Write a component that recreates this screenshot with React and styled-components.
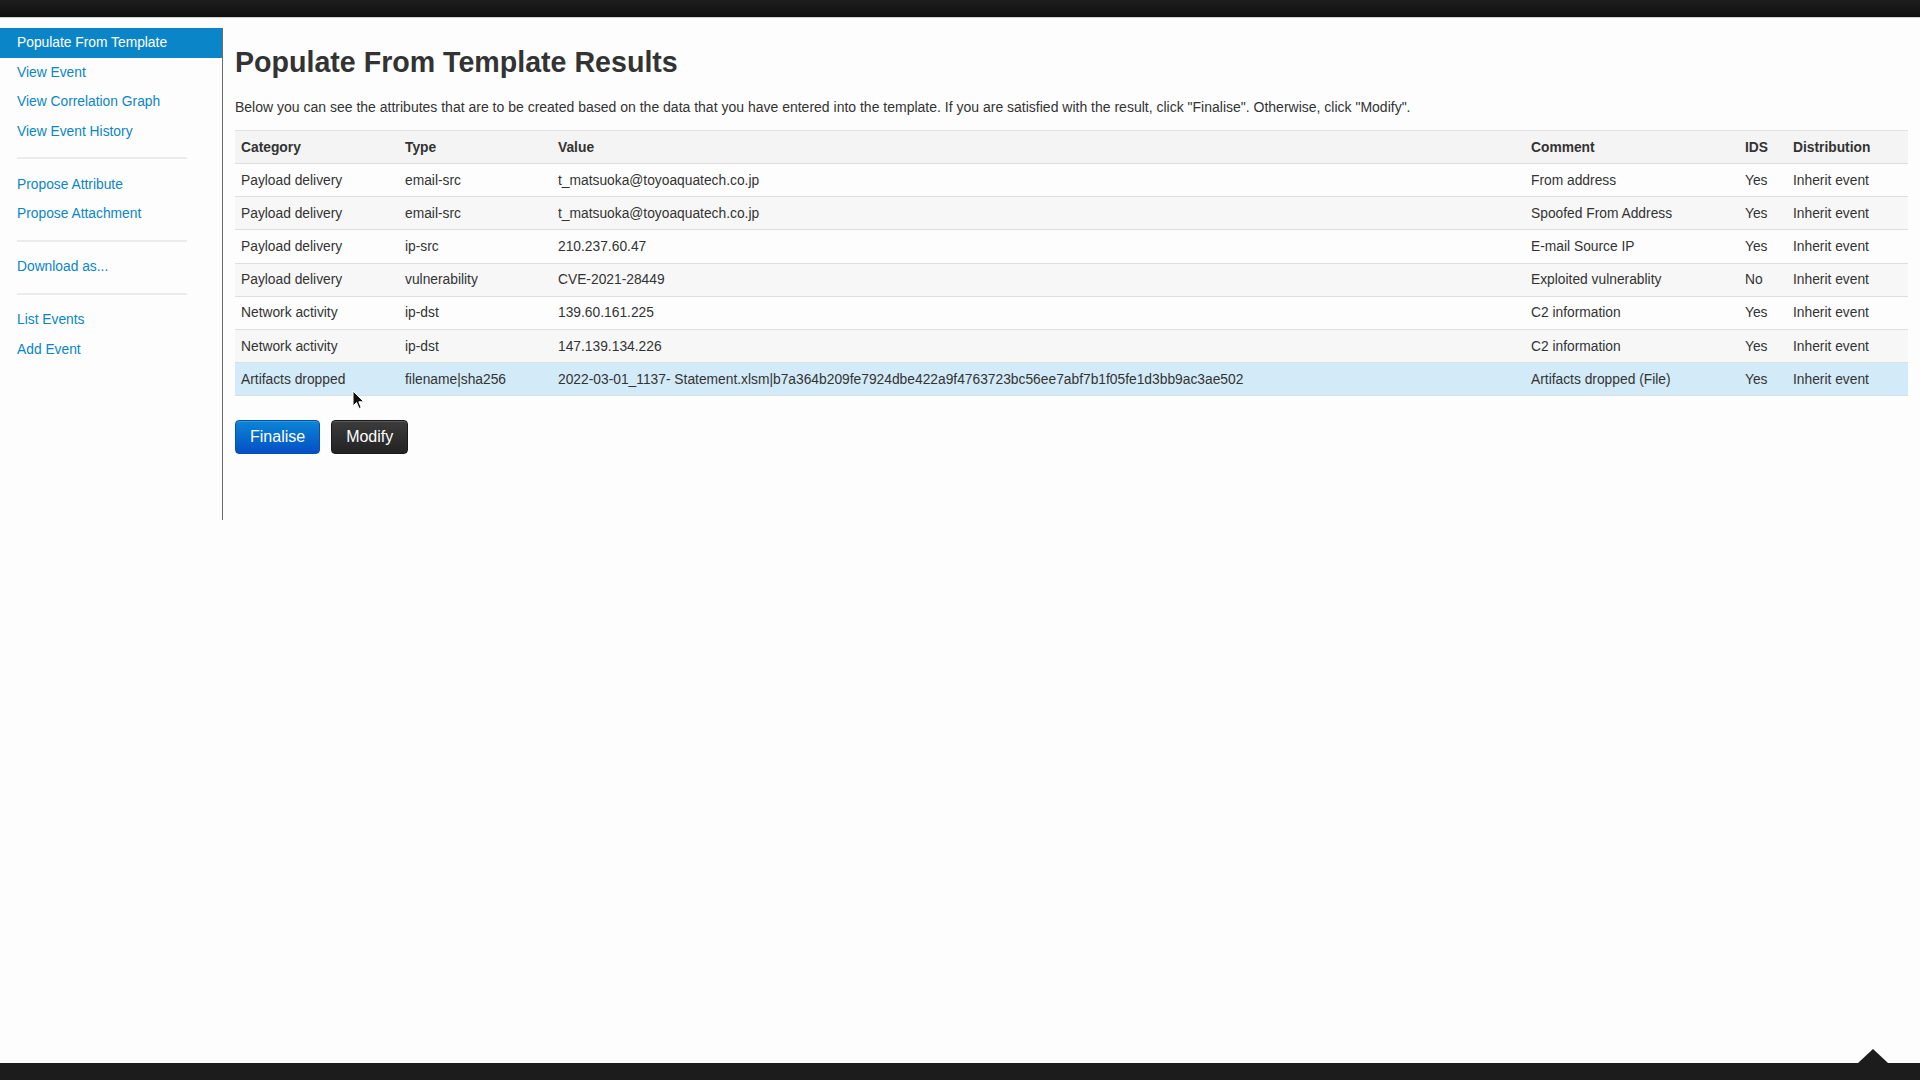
import React from 'react';
import styled, { createGlobalStyle } from 'styled-components';

const GlobalStyle = createGlobalStyle`
  html, body {
    margin: 0;
    padding: 0;
    background: #fdfdfd;
  }
  body {
    font-family: 'Liberation Sans', Arial, Helvetica, sans-serif;
    font-size: 13.8px;
    color: #333;
  }
`;

const Page = styled.div`
  min-height: 100vh;
  display: flex;
  flex-direction: column;
  position: relative;
`;

const TopBar = styled.div`
  height: 17px;
  background: linear-gradient(#1d1d1d, #0f0f0f);
  border-bottom: 1px solid #cfcfcf;
`;

const Body = styled.div`
  flex: 1;
  display: flex;
  align-items: flex-start;
`;

const Sidebar = styled.nav`
  width: 222px;
  height: 492px;
  margin-top: 10px;
  border-right: 1px solid #6a6a6a;
  display: flex;
  flex-direction: column;
  flex-shrink: 0;
`;

const NavLink = styled.a`
  display: block;
  padding: 6px 17px;
  line-height: 17.5px;
  font-size: 13.8px;
  text-decoration: none;
  color: ${p => (p.$active ? '#fff' : '#0a86c6')};
  background: ${p => (p.$active ? '#0a86c8' : 'transparent')};
`;

const Divider = styled.div`
  height: 2px;
  width: 170px;
  margin: 11px 0 10.5px 17px;
  background: #ececec;
`;

const Main = styled.main`
  flex: 1;
  min-width: 0;
  padding: 29px 12px 0 12px;
`;

const Title = styled.h2`
  margin: 0;
  font-size: 28.6px;
  line-height: 30px;
  font-weight: bold;
  color: #333;
`;

const Intro = styled.p`
  margin: 21px 0 14px;
  line-height: 18px;
  font-size: 14px;
`;

const Table = styled.table`
  width: 100%;
  border-collapse: collapse;
  table-layout: fixed;
  border-top: 1px solid #e2e2e2;
`;

const Th = styled.th`
  text-align: left;
  font-weight: bold;
  height: 32px;
  padding: 0 6px;
  background: #f4f4f4;
  border-bottom: 1px solid #dedede;
  width: ${p => p.$w - 12}px;
`;

const Row = styled.tr`
  background: ${p => (p.$selected ? '#d3eaf8' : p.$odd ? '#f7f7f7' : '#fdfdfd')};
`;

const Td = styled.td`
  height: 32.2px;
  padding: 0 6px;
  border-bottom: 1px solid #dedede;
  white-space: nowrap;
`;

const Actions = styled.div`
  display: flex;
  gap: 11px;
  margin-top: 24px;
`;

const Button = styled.button`
  height: 34px;
  padding: 0 14px;
  border-radius: 4px;
  font-family: 'Liberation Sans', Arial, sans-serif;
  font-size: 16px;
  color: #fff;
  cursor: pointer;
  border: 1px solid ${p => (p.$variant === 'primary' ? '#0a4db5' : '#1a1a1a')};
  background: ${p =>
    p.$variant === 'primary'
      ? 'linear-gradient(#0a86d6, #0450c4)'
      : 'linear-gradient(#3c3c3c, #222)'};
  box-shadow: inset 0 1px 0 rgba(255, 255, 255, 0.15);
`;

const Footer = styled.footer`
  height: 17px;
  background: #1c1c1c;
  position: relative;
`;

const UpArrow = styled.div`
  position: absolute;
  right: 32px;
  top: -14px;
  width: 0;
  height: 0;
  border-left: 15px solid transparent;
  border-right: 15px solid transparent;
  border-bottom: 14px solid #1c1c1c;
`;

const Cursor = styled.svg`
  position: absolute;
  left: 352px;
  top: 390px;
`;

const columns = [
  ['Category', 164],
  ['Type', 153],
  ['Value', 973],
  ['Comment', 214],
  ['IDS', 48],
  ['Distribution', 121],
];

const rows = [
  ['Payload delivery', 'email-src', 't_matsuoka@toyoaquatech.co.jp', 'From address', 'Yes'],
  ['Payload delivery', 'email-src', 't_matsuoka@toyoaquatech.co.jp', 'Spoofed From Address', 'Yes'],
  ['Payload delivery', 'ip-src', '210.237.60.47', 'E-mail Source IP', 'Yes'],
  ['Payload delivery', 'vulnerability', 'CVE-2021-28449', 'Exploited vulnerablity', 'No'],
  ['Network activity', 'ip-dst', '139.60.161.225', 'C2 information', 'Yes'],
  ['Network activity', 'ip-dst', '147.139.134.226', 'C2 information', 'Yes'],
  [
    'Artifacts dropped',
    'filename|sha256',
    '2022-03-01_1137- Statement.xlsm|b7a364b209fe7924dbe422a9f4763723bc56ee7abf7b1f05fe1d3bb9ac3ae502',
    'Artifacts dropped (File)',
    'Yes',
  ],
];

export default function App() {
  return (
    <Page>
      <GlobalStyle />
      <TopBar />
      <Body>
        <Sidebar>
          <NavLink $active>Populate From Template</NavLink>
          <NavLink>View Event</NavLink>
          <NavLink>View Correlation Graph</NavLink>
          <NavLink>View Event History</NavLink>
          <Divider />
          <NavLink>Propose Attribute</NavLink>
          <NavLink>Propose Attachment</NavLink>
          <Divider />
          <NavLink>Download as...</NavLink>
          <Divider />
          <NavLink>List Events</NavLink>
          <NavLink>Add Event</NavLink>
        </Sidebar>
        <Main>
          <Title>Populate From Template Results</Title>
          <Intro>
            Below you can see the attributes that are to be created based on the data that you have
            entered into the template. If you are satisfied with the result, click "Finalise".
            Otherwise, click "Modify".
          </Intro>
          <Table>
            <thead>
              <tr>
                {columns.map(([name, w]) => (
                  <Th key={name} $w={w}>{name}</Th>
                ))}
              </tr>
            </thead>
            <tbody>
              {rows.map((r, i) => (
                <Row key={i} $odd={i % 2 === 1} $selected={i === rows.length - 1}>
                  {r.map((c, j) => (
                    <Td key={j}>{c}</Td>
                  ))}
                  <Td>Inherit event</Td>
                </Row>
              ))}
            </tbody>
          </Table>
          <Actions>
            <Button $variant="primary">Finalise</Button>
            <Button>Modify</Button>
          </Actions>
        </Main>
      </Body>
      <Footer>
        <UpArrow />
      </Footer>
      <Cursor width="14" height="20" viewBox="0 0 14 20">
        <path d="M1 1 L1 16 L4.5 12.5 L7 18.5 L9.2 17.6 L6.8 11.8 L11.8 11.8 Z" fill="#111" stroke="#fff" strokeWidth="1" />
      </Cursor>
    </Page>
  );
}
